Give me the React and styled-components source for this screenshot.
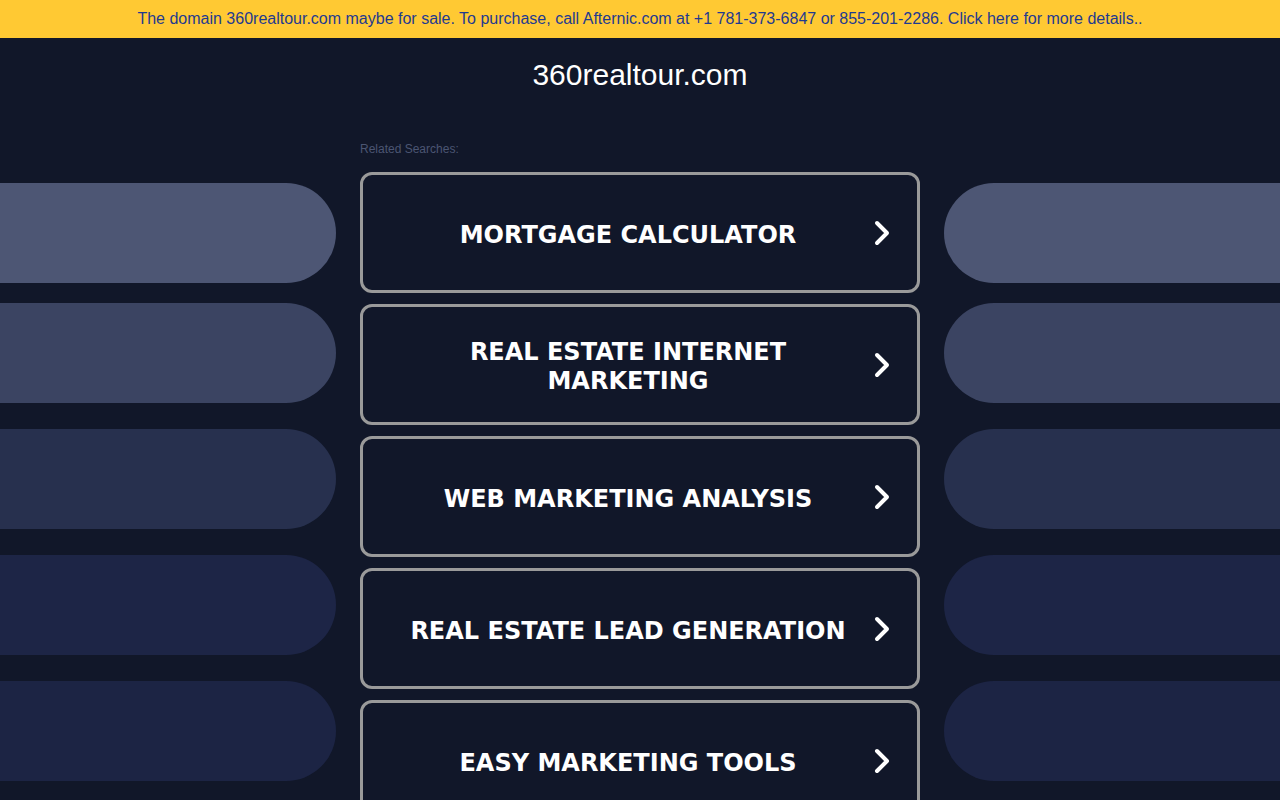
import React from 'react';
import styled, { createGlobalStyle } from 'styled-components';

const GlobalStyle = createGlobalStyle`
  html, body {
    margin: 0;
    padding: 0;
    background: #111729;
    font-family: "Liberation Sans", Arial, sans-serif;
    overflow: hidden;
  }
`;

const Banner = styled.div`
  height: 38px;
  background: #ffc933;
  color: #1f3a8f;
  font-size: 16px;
  display: flex;
  align-items: center;
  justify-content: center;
`;

const Title = styled.h1`
  margin: 0;
  padding: 18px 0 0;
  height: 74px;
  box-sizing: border-box;
  color: #ffffff;
  font-size: 30px;
  font-weight: 400;
  text-align: center;
  line-height: 38px;
`;

const Main = styled.div`
  display: grid;
  grid-template-columns: 1fr 560px 1fr;
  column-gap: 24px;
  padding-top: 30px;
`;

const Side = styled.div`
  display: flex;
  flex-direction: column;
  gap: 26px;
  padding-top: 41px;
  & > :first-child {
    margin-bottom: -6px;
  }
`;

const Pill = styled.div`
  height: 100px;
  background: ${p => p.$tone};
  border-radius: ${p => (p.$side === 'left' ? '0 50px 50px 0' : '50px 0 0 50px')};
`;

const Center = styled.div`
  display: flex;
  flex-direction: column;
`;

const Label = styled.div`
  color: #4b5572;
  font-size: 12px;
  height: 14px;
  line-height: 14px;
  margin-bottom: 16px;
`;

const List = styled.div`
  display: flex;
  flex-direction: column;
  gap: 11px;
`;

const Button = styled.a`
  box-sizing: border-box;
  height: 121px;
  border: 3px solid #9a9a9a;
  border-radius: 12px;
  display: flex;
  align-items: center;
  padding: 0 26px 0 20px;
  text-decoration: none;
  cursor: pointer;
`;

const ButtonText = styled.span`
  flex: 1;
  color: #ffffff;
  font-family: "DejaVu Sans", Verdana, sans-serif;
  font-weight: 700;
  font-size: 24px;
  line-height: 29px;
  text-align: center;
  padding: 5px 15px 0;
`;

const Chevron = () => (
  <svg width="18" height="26" viewBox="0 0 18 26">
    <polyline
      points="4,3 14,13 4,23"
      fill="none"
      stroke="#ffffff"
      strokeWidth="4"
      strokeLinecap="round"
      strokeLinejoin="round"
    />
  </svg>
);

const tones = ['#4d5674', '#3b4462', '#27304e', '#1d2546', '#1c2444'];
const searches = [
  'MORTGAGE CALCULATOR',
  'REAL ESTATE INTERNET MARKETING',
  'WEB MARKETING ANALYSIS',
  'REAL ESTATE LEAD GENERATION',
  'EASY MARKETING TOOLS',
];

const App = () => {
  return (
    <>
      <GlobalStyle />
      <Banner>
        The domain 360realtour.com maybe for sale. To purchase, call Afternic.com at +1 781-373-6847 or 855-201-2286. Click here for more details..
      </Banner>
      <Title>360realtour.com</Title>
      <Main>
        <Side>
          {tones.map(t => (
            <Pill key={t} $tone={t} $side="left" />
          ))}
        </Side>
        <Center>
          <Label>Related Searches:</Label>
          <List>
            {searches.map(s => (
              <Button key={s}>
                <ButtonText>{s}</ButtonText>
                <Chevron />
              </Button>
            ))}
          </List>
        </Center>
        <Side>
          {tones.map(t => (
            <Pill key={t} $tone={t} $side="right" />
          ))}
        </Side>
      </Main>
    </>
  );
};

export default App;
